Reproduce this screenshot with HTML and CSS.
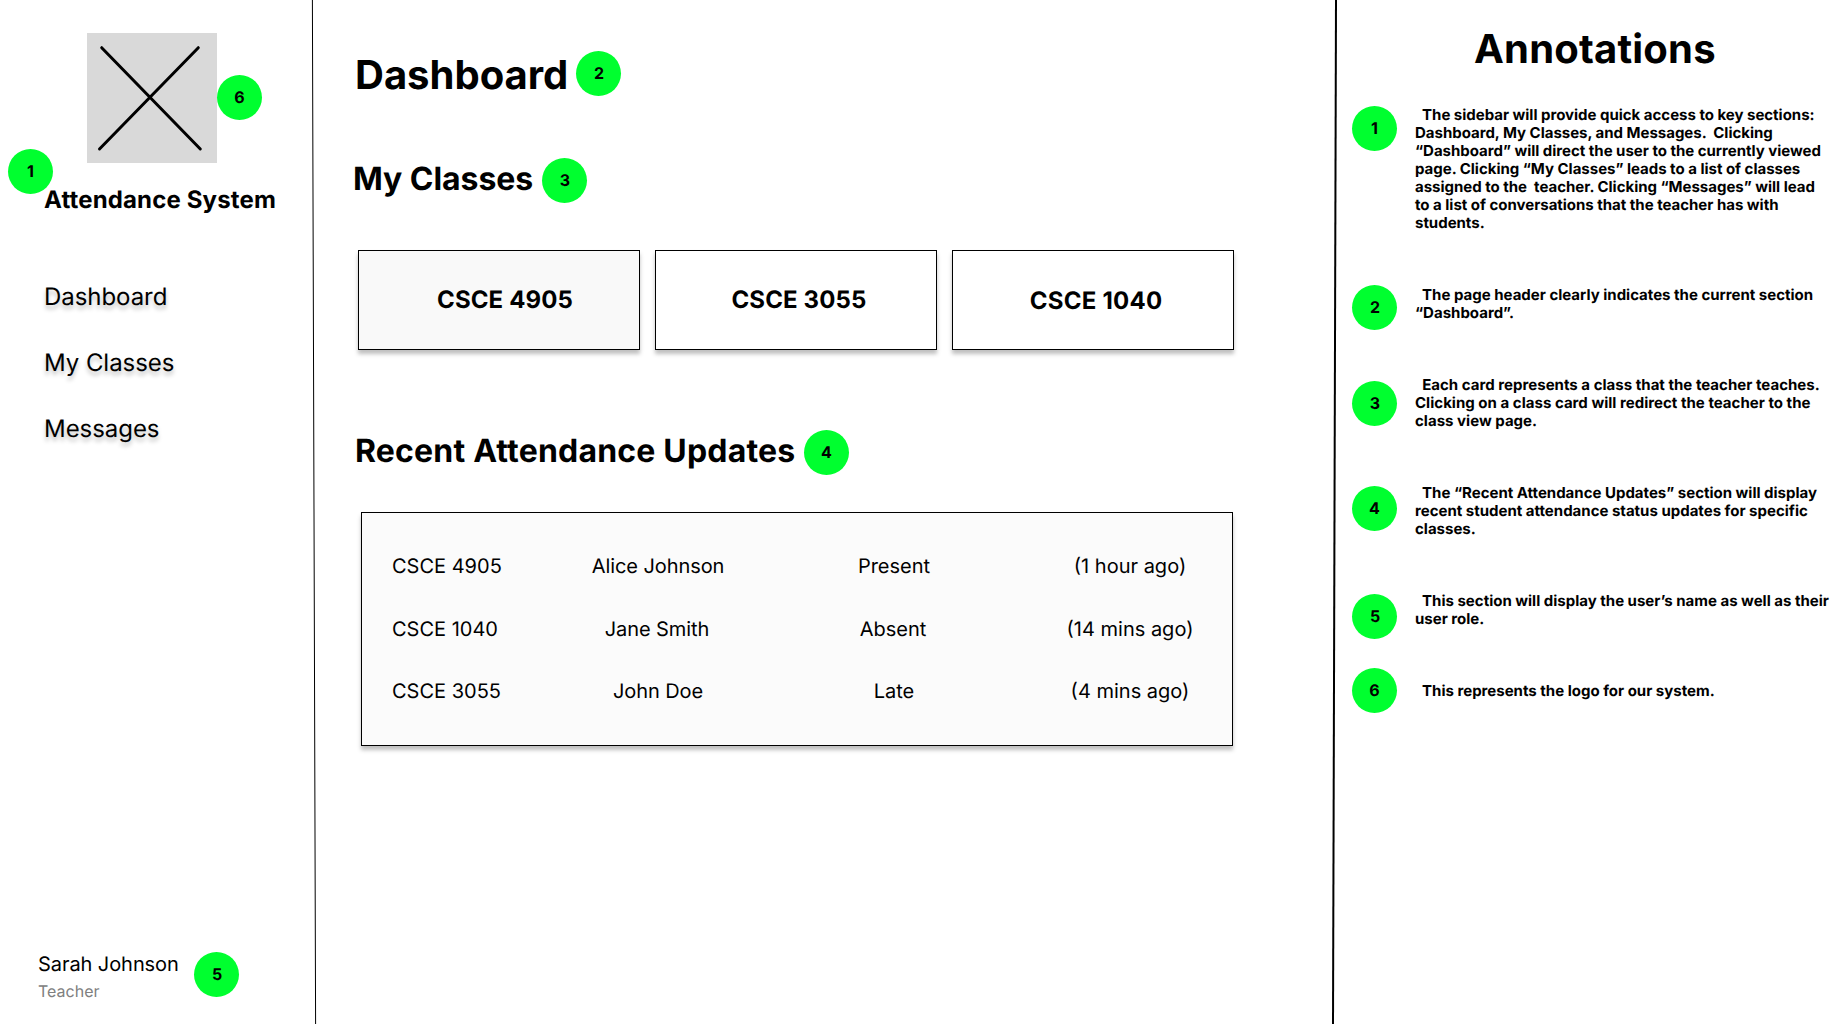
FILE: index.html
```html
<!DOCTYPE html>
<html lang="en">
<head>
<meta charset="utf-8">
<title>Attendance System</title>
<link rel="stylesheet" href="styles.css">
</head>
<body>
<div class="app">
  <aside class="sidebar">
    <div class="brand">
      <svg class="logo" width="130" height="130" viewBox="0 0 130 130"><rect width="130" height="130" fill="#d9d9d9"/><path d="M14.7 14.7 113.3 116M111.3 14.7 12.5 116" stroke="#000" stroke-width="3" stroke-linecap="round"/></svg>
      <span class="badge badge-centered badge-logo">6</span>
      <span class="badge badge-centered badge-sidebar">1</span>
      <h2 class="brand-name">Attendance System</h2>
    </div>
    <nav class="nav">
      <a>Dashboard</a>
      <a>My Classes</a>
      <a>Messages</a>
    </nav>
    <div class="user">
      <div>
        <div class="user-name">Sarah Johnson</div>
        <div class="user-role">Teacher</div>
      </div>
      <span class="badge">5</span>
    </div>
  </aside>

  <main class="main">
    <div class="heading page-heading"><h1>Dashboard</h1><span class="badge">2</span></div>
    <div class="heading classes-heading"><h2>My Classes</h2><span class="badge">3</span></div>
    <div class="cards">
      <div class="card card-active">CSCE 4905</div>
      <div class="card">CSCE 3055</div>
      <div class="card card-last">CSCE 1040</div>
    </div>
    <div class="heading updates-heading"><h2>Recent Attendance Updates</h2><span class="badge badge-centered">4</span></div>
    <div class="updates">
      <div class="row"><span>CSCE 4905</span><span>Alice Johnson</span><span>Present</span><span>(1 hour ago)</span></div>
      <div class="row row-middle"><span>CSCE 1040</span><span>Jane Smith</span><span>Absent</span><span>(14 mins ago)</span></div>
      <div class="row"><span>CSCE 3055</span><span>John Doe</span><span>Late</span><span>(4 mins ago)</span></div>
    </div>
  </main>

  <aside class="notes">
    <h1 class="notes-title">Annotations</h1>
    <div class="note note-1"><span class="badge badge-centered">1</span><p>  The sidebar will provide quick access to key sections:
Dashboard, My Classes, and Messages.  Clicking
“Dashboard” will direct the user to the currently viewed
page. Clicking “My Classes” leads to a list of classes
assigned to the  teacher. Clicking “Messages” will lead
to a list of conversations that the teacher has with
students.</p></div>
    <div class="note note-2"><span class="badge">2</span><p>  The page header clearly indicates the current section
“Dashboard”.</p></div>
    <div class="note note-3"><span class="badge">3</span><p>  Each card represents a class that the teacher teaches.
Clicking on a class card will redirect the teacher to the
class view page.</p></div>
    <div class="note note-4"><span class="badge badge-centered">4</span><p>  The “Recent Attendance Updates” section will display
recent student attendance status updates for specific
classes.</p></div>
    <div class="note note-5"><span class="badge">5</span><p>  This section will display the user’s name as well as their
user role.</p></div>
    <div class="note note-6"><span class="badge badge-centered">6</span><p>  This represents the logo for our system.</p></div>
  </aside>

  <svg class="dividers" width="1848" height="1024" viewBox="0 0 1848 1024" stroke="#000">
    <line x1="312.4" y1="0" x2="315.6" y2="1024"/>
    <line x1="1336" y1="0" x2="1333" y2="1024" stroke-width="2"/>
  </svg>
</div>
</body>
</html>
```
FILE: styles.css
```css
* { box-sizing: border-box; margin: 0; padding: 0; }

body {
  font-family: Inter, "Liberation Sans", sans-serif;
  text-rendering: geometricPrecision;
  color: #000;
  background: #fff;
}

.app {
  position: relative;
  display: grid;
  grid-template-columns: 314px 1020px 514px;
  height: 1024px;
  overflow: hidden;
}

.dividers { position: absolute; inset: 0; pointer-events: none; }

.badge {
  display: flex;
  flex: none;
  align-items: center;
  justify-content: center;
  width: 45px;
  height: 45px;
  padding-left: 1px;
  border-radius: 50%;
  background: #00ff2f;
  font-size: 16px;
  font-weight: 700;
  line-height: 19px;
}
.badge-centered { padding-left: 0; }

/* Sidebar */
.sidebar { display: flex; flex-direction: column; padding-bottom: 23px; }
.brand { position: relative; padding-top: 33px; }
.logo { display: block; margin-left: 87px; }
.badge-logo { position: absolute; left: 217px; top: 75px; }
.badge-sidebar { position: absolute; left: 8px; top: 149px; }
.brand-name { margin: 22px 0 0 44px; font-size: 24px; line-height: 29px; letter-spacing: 0.15px; white-space: nowrap; }
.nav {
  display: flex;
  flex-direction: column;
  gap: 37px;
  margin: 68px 0 0 44px;
  font-size: 24px;
  line-height: 29px;
  letter-spacing: -0.05px;
  text-shadow: 0 4px 4px rgba(0, 0, 0, 0.25);
}
.user { display: flex; gap: 15px; margin: auto 0 0 38px; }
.user-name { font-size: 20px; line-height: 24px; width: 141px; letter-spacing: -0.07px; white-space: nowrap; }
.user-role { margin-top: 6px; font-size: 16px; line-height: 19px; color: #808080; }

/* Main column */
.main { padding: 50px 0 0 39px; }
.heading { display: flex; align-items: flex-start; white-space: nowrap; }
.page-heading { height: 108px; padding-left: 2px; }
.page-heading h1 { width: 221px; margin-top: 1px; font-size: 40px; line-height: 48px; }
.page-heading .badge { margin-top: 1px; }
.heading h2 { font-size: 32px; line-height: 39px; margin-top: 1px; }
.classes-heading { height: 92px; }
.classes-heading h2 { width: 189px; letter-spacing: -0.05px; }
.updates-heading { height: 82px; padding-left: 2px; }
.updates-heading h2 { width: 449px; letter-spacing: 0.19px; }

.cards { display: flex; gap: 15px; margin: 0 0 80px 5px; }
.card {
  display: flex;
  align-items: center;
  justify-content: center;
  width: 282px;
  height: 100px;
  padding: 0 0 1px 6px;
  border: 1px solid #000;
  background: #fff;
  box-shadow: 0 4px 4px rgba(0, 0, 0, 0.25);
  font-size: 24px;
  font-weight: 700;
  line-height: 29px;
  letter-spacing: 0.13px;
}
.card-active { padding-left: 12px; background: #f9f9f9; }
.card-last { padding: 1px 0 0 6px; letter-spacing: 0.25px; }

.updates {
  width: 872px;
  height: 234px;
  margin-left: 8px;
  padding-top: 41px;
  border: 1px solid #000;
  background: #fbfbfb;
  box-shadow: 0 4px 4px rgba(0, 0, 0, 0.25);
}
.row {
  display: grid;
  grid-template-columns: 148px 236px 236px 236px;
  height: 63px;
  padding-left: 30px;
  font-size: 20px;
  line-height: 24px;
  text-align: center;
}
.row span:first-child { text-align: left; }
.row span:nth-child(2) { letter-spacing: -0.08px; }
.row-middle { height: 62px; }
.row-middle span:nth-child(2), .row-middle span:nth-child(3) { padding-right: 2px; }

/* Annotations */
.notes { padding: 25px 0 0 18px; }
.notes-title { height: 81px; margin-left: 122px; font-size: 40px; line-height: 48px; letter-spacing: 0.2px; }
.note { display: flex; align-items: flex-start; gap: 18px; }
.note p { font-size: 15px; font-weight: 700; line-height: 18px; white-space: pre; }
.note-1 { height: 180px; }
.note-1 p { letter-spacing: -0.015px; }
.note-2 { height: 90px; }
.note-3, .note-4 { height: 108px; }
.note-3 p { letter-spacing: 0.02px; }
.note-5 { height: 90px; }
.note-2 .badge { margin-top: -1px; }
.note-3 .badge { margin-top: 5px; }
.note-4 .badge, .note-5 .badge { margin-top: 2px; }
.note-6 .badge { margin-top: -14px; }
```
